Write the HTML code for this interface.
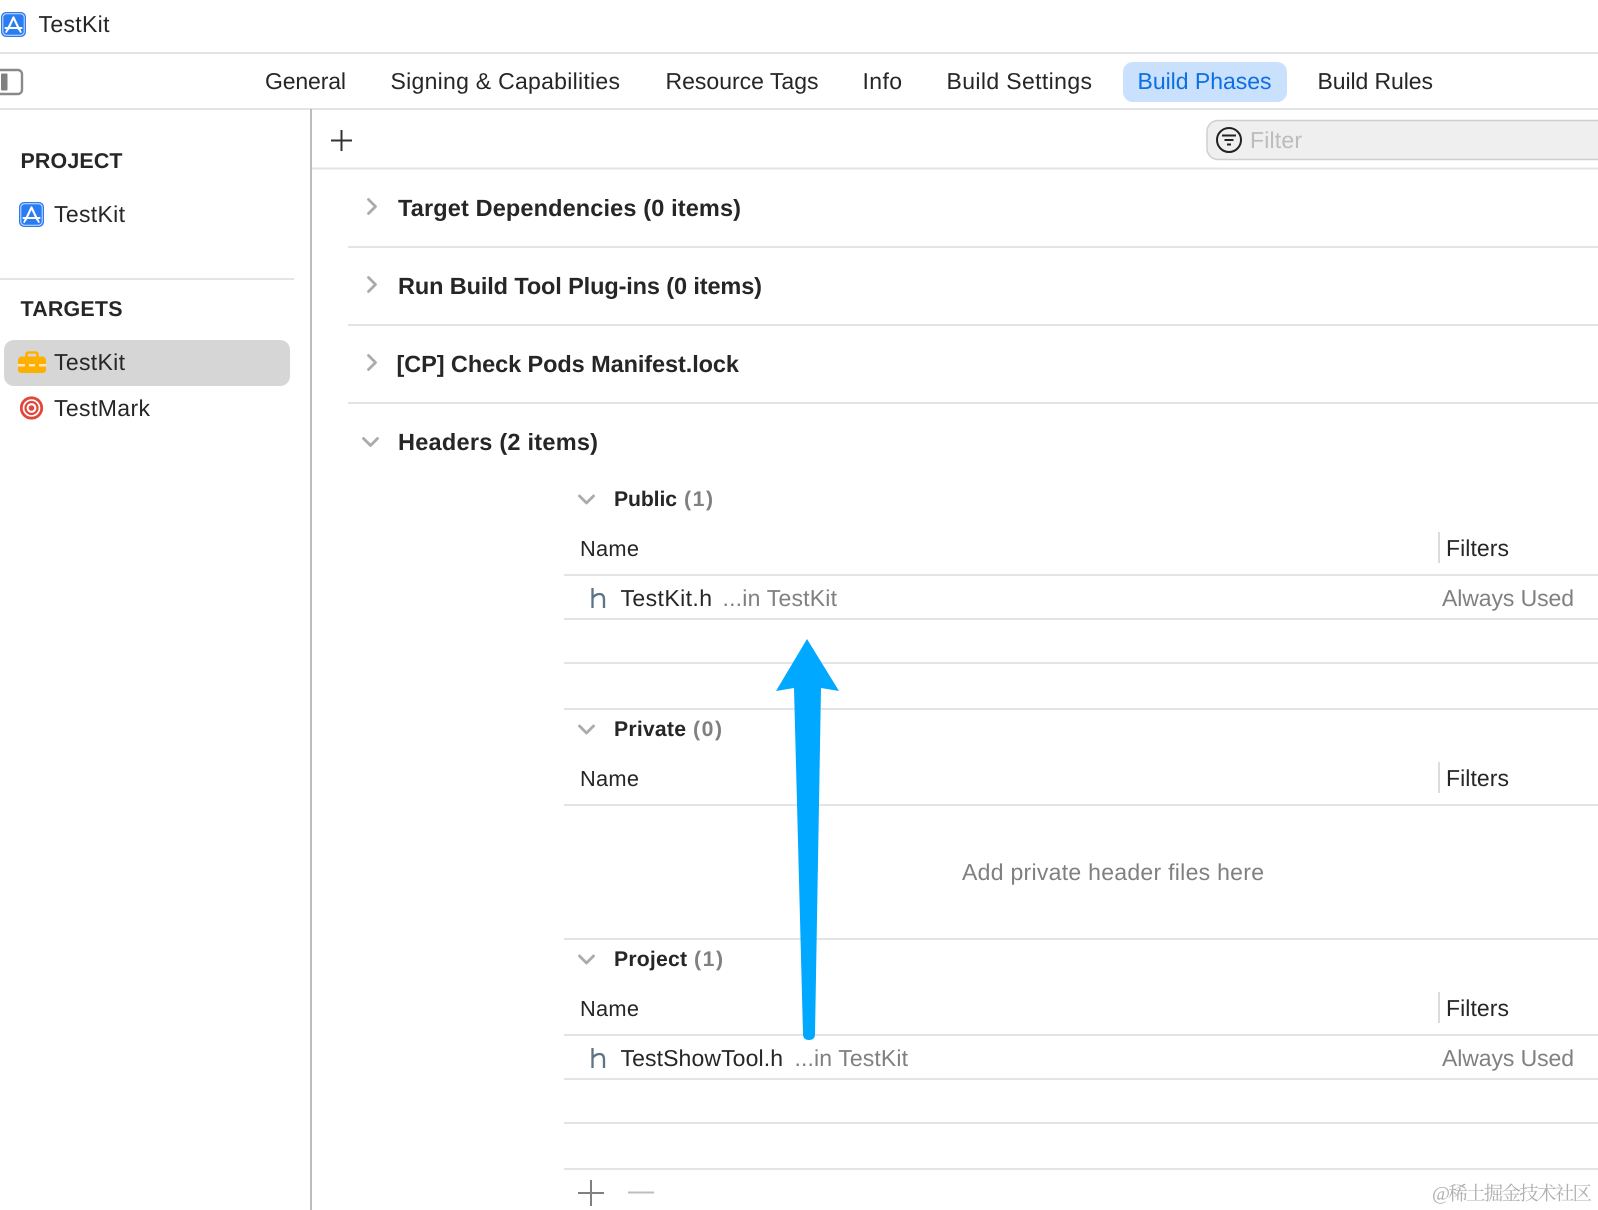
<!DOCTYPE html>
<html><head><meta charset="utf-8"><title>TestKit</title>
<style>
html,body{margin:0;padding:0;background:#fff;width:1598px;height:1210px;overflow:hidden}
svg{display:block}
text{font-family:"Liberation Sans","Noto Sans CJK SC",sans-serif;font-size:23px;fill:#262626;text-rendering:geometricPrecision}
.b{font-weight:bold;font-size:23.5px}
.h{font-weight:bold;font-size:21.4px}
.s{font-weight:bold;font-size:21.2px}
.n{font-size:21.8px}
.g{fill:#808080}
.ln{stroke:#e4e4e4;stroke-width:2;fill:none}
.ch{stroke:#ababab;stroke-width:2.8;fill:none;stroke-linecap:round;stroke-linejoin:round}
</style></head><body>
<svg width="1598" height="1210" viewBox="0 0 1598 1210" xmlns="http://www.w3.org/2000/svg">
<defs>
<g id="app">
<rect x="0" y="0" width="25" height="25" rx="5" fill="#2b7cf1"/>
<rect x="1.8" y="1.8" width="21.4" height="21.4" rx="3.6" fill="none" stroke="#cfe2fd" stroke-width="1"/>
<path d="M12.5 5.5L6.8 17.500M12.500 5.500L18.200 17.500M4.500 16H20.500" stroke="#fff" stroke-width="2.100" fill="none" stroke-linecap="round"/>
<path d="M6.500 17.500L5.200 20M18.500 17.500L19.800 20" stroke="#fff" stroke-width="1.800" fill="none" stroke-linecap="round"/>
</g>
</defs>

<!-- structural lines -->
<line class="ln" x1="0" y1="53" x2="1598" y2="53"/>
<line class="ln" x1="0" y1="109" x2="1598" y2="109"/>
<line x1="311" y1="109" x2="311" y2="1210" stroke="#bcbcbc" stroke-width="2"/>
<line class="ln" x1="312" y1="168.5" x2="1598" y2="168.5"/>
<line class="ln" x1="0" y1="279" x2="294" y2="279"/>
<line class="ln" x1="348" y1="247" x2="1598" y2="247"/>
<line class="ln" x1="348" y1="325" x2="1598" y2="325"/>
<line class="ln" x1="348" y1="403" x2="1598" y2="403"/>
<line class="ln" x1="564" y1="575" x2="1598" y2="575"/>
<line class="ln" x1="564" y1="619" x2="1598" y2="619"/>
<line class="ln" x1="564" y1="663" x2="1598" y2="663"/>
<line class="ln" x1="564" y1="709" x2="1598" y2="709"/>
<line class="ln" x1="564" y1="805" x2="1598" y2="805"/>
<line class="ln" x1="564" y1="939" x2="1598" y2="939"/>
<line class="ln" x1="564" y1="1035" x2="1598" y2="1035"/>
<line class="ln" x1="564" y1="1079" x2="1598" y2="1079"/>
<line class="ln" x1="564" y1="1123" x2="1598" y2="1123"/>
<line class="ln" x1="564" y1="1169" x2="1598" y2="1169"/>

<!-- title bar -->
<use href="#app" x="1" y="12"/>
<text x="38.5" y="32" textLength="71" lengthAdjust="spacing">TestKit</text>

<!-- sidebar toggle -->
<rect x="-6" y="70" width="28" height="24" rx="4" fill="none" stroke="#8a8a8a" stroke-width="2.400"/>
<rect x="1" y="73.500" width="6.500" height="17" rx="1" fill="#808080"/>

<!-- tabs -->
<text x="265" y="89" textLength="81" lengthAdjust="spacing">General</text>
<text x="390.500" y="89" textLength="229.500" lengthAdjust="spacing">Signing &amp; Capabilities</text>
<text x="665.500" y="89" textLength="153" lengthAdjust="spacing">Resource Tags</text>
<text x="862.500" y="89" textLength="39.500" lengthAdjust="spacing">Info</text>
<text x="946.500" y="89" textLength="145.500" lengthAdjust="spacing">Build Settings</text>
<rect x="1123" y="62" width="164" height="40" rx="10" fill="#c9e1fd"/>
<text x="1137.500" y="89" textLength="134" lengthAdjust="spacing" style="fill:#0d6fe2">Build Phases</text>
<text x="1317.500" y="89" textLength="115.500" lengthAdjust="spacing">Build Rules</text>

<!-- toolbar -->
<path d="M341.500 130V151M331 140.500H352" stroke="#333" stroke-width="2" fill="none"/>
<rect x="1207" y="120.500" width="420" height="39" rx="11" fill="#efefef" stroke="#cfcfcf" stroke-width="1.500"/>
<circle cx="1229" cy="140" r="12" fill="none" stroke="#222" stroke-width="2"/>
<path d="M1222 135.500H1236M1224.500 140H1233.500M1227 144.500H1231" stroke="#222" stroke-width="2" fill="none"/>
<text x="1250" y="148" textLength="52" lengthAdjust="spacing" style="fill:#bcbcbc">Filter</text>

<!-- sidebar -->
<text class="h" x="20.500" y="168" textLength="102" lengthAdjust="spacing">PROJECT</text>
<use href="#app" x="19" y="202"/>
<text x="54" y="222" textLength="71" lengthAdjust="spacing">TestKit</text>
<text class="h" x="20.500" y="316" textLength="102" lengthAdjust="spacing">TARGETS</text>
<rect x="4" y="340" width="286" height="46" rx="10" fill="#d6d6d6"/>
<path d="M26.500 357v-2.500a2 2 0 0 1 2-2h7a2 2 0 0 1 2 2V357" fill="none" stroke="#fdb000" stroke-width="2.600"/>
<path d="M18 364v-3.500a4 4 0 0 1 4-4h20a4 4 0 0 1 4 4V364z" fill="#fdb000"/>
<path d="M18 366.500h28V370a3 3 0 0 1-3 3H21a3 3 0 0 1-3-3z" fill="#fdb000"/>
<rect x="18" y="364" width="28" height="2.500" fill="#f6e6bd"/>
<rect x="25" y="362.500" width="4" height="5.500" rx="1" fill="#fdb000"/>
<rect x="35" y="362.500" width="4" height="5.500" rx="1" fill="#fdb000"/>
<text x="54" y="370" textLength="71" lengthAdjust="spacing">TestKit</text>
<circle cx="31.500" cy="408" r="10.200" fill="none" stroke="#e2483a" stroke-width="2.800"/>
<circle cx="31.500" cy="408" r="6" fill="none" stroke="#e2483a" stroke-width="2.200"/>
<circle cx="31.500" cy="408" r="2.800" fill="#e2483a"/>
<text x="54" y="416" textLength="96" lengthAdjust="spacing">TestMark</text>

<!-- sections -->
<path class="ch" d="M368.500 199.500L375.500 206.500L368.500 213.500"/>
<text class="b" x="398" y="216" textLength="343" lengthAdjust="spacing">Target Dependencies (0 items)</text>
<path class="ch" d="M368.500 277.500L375.500 284.500L368.500 291.500"/>
<text class="b" x="398" y="294" textLength="364" lengthAdjust="spacing">Run Build Tool Plug-ins (0 items)</text>
<path class="ch" d="M368.500 355.500L375.500 362.500L368.500 369.500"/>
<text class="b" x="396.500" y="372" textLength="342.500" lengthAdjust="spacing">[CP] Check Pods Manifest.lock</text>
<path class="ch" d="M363.500 438.500L370.500 445.500L377.500 438.500"/>
<text class="b" x="398" y="450" textLength="200" lengthAdjust="spacing">Headers (2 items)</text>

<!-- Public -->
<path class="ch" d="M579.500 496L586.500 503L593.500 496"/>
<text class="s" x="614" y="506" textLength="63" lengthAdjust="spacing">Public</text>
<text class="s g" x="684" y="506" textLength="29" lengthAdjust="spacing">(1)</text>
<text class="n" x="580" y="556" textLength="59" lengthAdjust="spacing">Name</text>
<line x1="1439" y1="532" x2="1439" y2="563" stroke="#dcdcdc" stroke-width="2"/>
<text x="1446" y="556" textLength="63" lengthAdjust="spacing">Filters</text>
<path d="M592.500 588V608M592.500 598C594 595.500 597 594 599.500 594C602.500 594 604 596 604 599.500V608" fill="none" stroke="#5d7488" stroke-width="2.300"/>
<text x="620.500" y="606" textLength="91.500" lengthAdjust="spacing">TestKit.h</text>
<text class="g" x="722.500" y="606" textLength="114.500" lengthAdjust="spacing">...in TestKit</text>
<text class="g" x="1442" y="606" textLength="132" lengthAdjust="spacing">Always Used</text>

<!-- Private -->
<path class="ch" d="M579.500 726L586.500 733L593.500 726"/>
<text class="s" x="614" y="736" textLength="72" lengthAdjust="spacing">Private</text>
<text class="s g" x="693" y="736" textLength="29" lengthAdjust="spacing">(0)</text>
<text class="n" x="580" y="786" textLength="59" lengthAdjust="spacing">Name</text>
<line x1="1439" y1="762" x2="1439" y2="793" stroke="#dcdcdc" stroke-width="2"/>
<text x="1446" y="786" textLength="63" lengthAdjust="spacing">Filters</text>
<text class="g" x="962" y="880" textLength="302" lengthAdjust="spacing">Add private header files here</text>

<!-- Project -->
<path class="ch" d="M579.500 956L586.500 963L593.500 956"/>
<text class="s" x="614" y="966" textLength="73" lengthAdjust="spacing">Project</text>
<text class="s g" x="694" y="966" textLength="29" lengthAdjust="spacing">(1)</text>
<text class="n" x="580" y="1016" textLength="59" lengthAdjust="spacing">Name</text>
<line x1="1439" y1="992" x2="1439" y2="1023" stroke="#dcdcdc" stroke-width="2"/>
<text x="1446" y="1016" textLength="63" lengthAdjust="spacing">Filters</text>
<path d="M592.500 1048V1068M592.500 1058C594 1055.500 597 1054 599.500 1054C602.500 1054 604 1056 604 1059.500V1068" fill="none" stroke="#5d7488" stroke-width="2.300"/>
<text x="620.500" y="1066" textLength="162.500" lengthAdjust="spacing">TestShowTool.h</text>
<text class="g" x="794.500" y="1066" textLength="113.500" lengthAdjust="spacing">...in TestKit</text>
<text class="g" x="1442" y="1066" textLength="132" lengthAdjust="spacing">Always Used</text>

<!-- bottom +/- -->
<path d="M591 1180V1206M578 1193H604" stroke="#808080" stroke-width="2" fill="none"/>
<path d="M628 1192.500H654" stroke="#bdbdbd" stroke-width="2" fill="none"/>

<!-- arrow -->
<path d="M807 639L839 691L821 688L815 1034Q815 1040 809 1040Q803 1040 803 1034L794 688L776 691Z" fill="#00a8ff"/>

<!-- watermark -->
<text x="1432" y="1200" textLength="160" lengthAdjust="spacing" style="font-family:'Liberation Serif','Noto Serif CJK SC',serif;font-size:19.500px;fill:#b0b0b0">@稀土掘金技术社区</text>
</svg>
</body></html>
